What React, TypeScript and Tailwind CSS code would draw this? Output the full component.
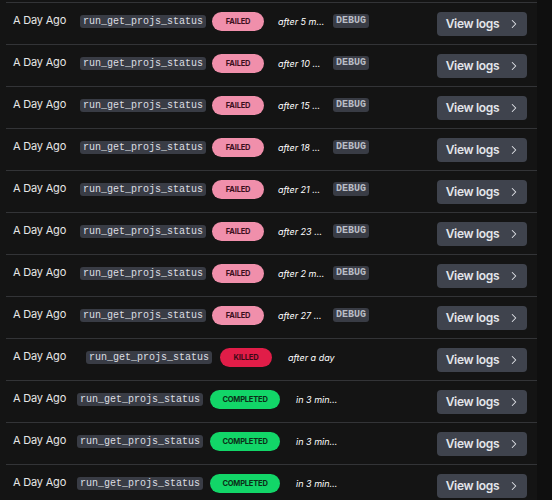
import { ChevronRight } from 'lucide-react'

type Kind = 'failed' | 'killed' | 'completed'

const rows: { kind: Kind; duration: string }[] = [
  { kind: 'failed', duration: 'after 5 m…' },
  { kind: 'failed', duration: 'after 10 …' },
  { kind: 'failed', duration: 'after 15 …' },
  { kind: 'failed', duration: 'after 18 …' },
  { kind: 'failed', duration: 'after 21 …' },
  { kind: 'failed', duration: 'after 23 …' },
  { kind: 'failed', duration: 'after 2 m…' },
  { kind: 'failed', duration: 'after 27 …' },
  { kind: 'killed', duration: 'after a day' },
  { kind: 'completed', duration: 'in 3 min…' },
  { kind: 'completed', duration: 'in 3 min…' },
  { kind: 'completed', duration: 'in 3 min…' },
]

const layout = {
  failed: {
    first: 'w-[67px]',
    badgeGap: 'ml-[6px]',
    badge: 'w-[52px] bg-[#f08fab] text-[#3b1020]',
    label: 'FAILED',
    durGap: 'ml-[14px] w-[55px]',
  },
  killed: {
    first: 'w-[73px]',
    badgeGap: 'ml-[8px]',
    badge: 'w-[52px] bg-[#e11d48] text-[#3b0a16]',
    label: 'KILLED',
    durGap: 'ml-[16px] w-[60px]',
  },
  completed: {
    first: 'w-[64px]',
    badgeGap: 'ml-[7px]',
    badge: 'w-[70px] bg-[#12d668] text-[#0b2e17]',
    label: 'COMPLETED',
    durGap: 'ml-[16px] w-[50px]',
  },
}

function Row({ kind, duration }: { kind: Kind; duration: string }) {
  const l = layout[kind]
  return (
    <div className="flex items-start h-[42px] border-t border-[#333437] pt-[9px] pl-[7px] pr-[10px]">
      <div className="flex items-center h-[19px]">
        <div className={`${l.first} text-[11px] tracking-[-0.2px] text-[#e6e6e6] -mt-[2px]`}>A Day Ago</div>
        <div
          className="h-[13px] leading-[13px] px-[3px] rounded-[3px] bg-[#393c45] text-[#dcdee2] text-[10px] -mt-[1px]"
          style={{ fontFamily: '"Liberation Mono", monospace' }}
        >
          run_get_projs_status
        </div>
        <div
          className={`${l.badgeGap} ${l.badge} h-[19px] rounded-full flex items-center justify-center text-[7.5px] font-bold tracking-tight`}
        >
          {l.label}
        </div>
        <div className={`${l.durGap} text-[9px] italic text-white whitespace-nowrap`}>{duration}</div>
        {kind === 'failed' && (
          <div
            className="h-[14px] leading-[14px] px-[3px] rounded-[3px] bg-[#393c45] text-[#b9bdc6] text-[10px] font-bold -mt-[2px]"
            style={{ fontFamily: '"Liberation Mono", monospace' }}
          >
            DEBUG
          </div>
        )}
      </div>
      <button className="ml-auto w-[90px] h-[24px] rounded-[4px] bg-[#3f434d] flex items-center justify-center gap-[8px] pl-[3px] text-[12px] tracking-[-0.3px] font-semibold text-[#e3e5ea]">
        View logs
        <ChevronRight size={14} strokeWidth={1.75} />
      </button>
    </div>
  )
}

export default function App() {
  return (
    <div
      className="flex w-[552px] h-[500px] overflow-hidden bg-[#141414]"
      style={{ fontFamily: 'Inter, "Noto Sans", sans-serif' }}
    >
      <div className="flex-1 pl-[6px] pt-[2px]">
        {rows.map((r, i) => (
          <Row key={i} kind={r.kind} duration={r.duration} />
        ))}
      </div>
      <div className="w-[15px] bg-[#0f0f0f]" />
    </div>
  )
}
